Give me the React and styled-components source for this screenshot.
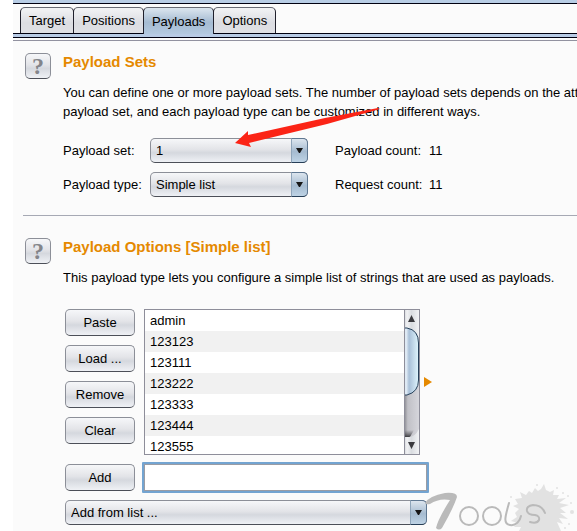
import React, { useState } from "react";
import styled, { createGlobalStyle } from "styled-components";

const tabs = ["Target", "Positions", "Payloads", "Options"];
const payloads = ["admin", "123123", "123111", "123222", "123333", "123444", "123555"];

export default function App() {
  const [active, setActive] = useState("Payloads");
  const [item, setItem] = useState("");

  return (
    <Window>
      <GlobalStyle />
      <TopBand />
      <TabBar role="tablist">
        {tabs.map((tab) => (
          <Tab
            key={tab}
            role="tab"
            aria-selected={tab === active}
            $active={tab === active}
            onClick={() => setActive(tab)}
          >
            {tab}
          </Tab>
        ))}
      </TabBar>
      <TabBand />

      <Panel>
        <Section>
          <HelpButton aria-label="Help">?</HelpButton>
          <Body>
            <Title>Payload Sets</Title>
            <Text>
              You can define one or more payload sets. The number of payload sets depends on the att
              <br />
              payload set, and each payload type can be customized in different ways.
            </Text>
            <Fields>
              <label htmlFor="payload-set">Payload set:</label>
              <Dropdown id="payload-set" options={["1"]} />
              <Count>
                <span>Payload count:</span>
                <span>11</span>
              </Count>
              <label htmlFor="payload-type">Payload type:</label>
              <Dropdown id="payload-type" options={["Simple list"]} />
              <Count>
                <span>Request count:</span>
                <span>11</span>
              </Count>
            </Fields>
            <RedArrow />
          </Body>
        </Section>

        <Divider />

        <Section>
          <HelpButton aria-label="Help">?</HelpButton>
          <Body>
            <Title>Payload Options [Simple list]</Title>
            <Text>
              This payload type lets you configure a simple list of strings that are used as payloads.
            </Text>
            <Editor>
              <ButtonColumn>
                <Button>Paste</Button>
                <Button>Load ...</Button>
                <Button>Remove</Button>
                <Button>Clear</Button>
              </ButtonColumn>
              <ListRow>
                <ListBox>
                  <List>
                    {payloads.map((p) => (
                      <Item key={p}>{p}</Item>
                    ))}
                  </List>
                  <ScrollBar />
                </ListBox>
                <Marker viewBox="0 0 8 10" aria-hidden="true">
                  <path d="M0 0L8 5L0 10Z" fill="#e58900" />
                </Marker>
              </ListRow>
              <AddButton>Add</AddButton>
              <TextInput
                aria-label="New item"
                value={item}
                onChange={(e) => setItem(e.target.value)}
              />
              <FullRow>
                <Dropdown label="Add from list" options={["Add from list ..."]} />
              </FullRow>
            </Editor>
          </Body>
        </Section>
      </Panel>
      <Watermark />
    </Window>
  );
}

function Dropdown({ id, label, options }) {
  return (
    <SelectBox>
      <Select id={id} aria-label={label}>
        {options.map((o) => (
          <option key={o}>{o}</option>
        ))}
      </Select>
      <SelectArrow>
        <svg width="7" height="6" viewBox="0 0 7 6">
          <path d="M0 0H7L4 5H3Z" fill="#171717" />
        </svg>
      </SelectArrow>
    </SelectBox>
  );
}

function ScrollBar() {
  return (
    <Scroll viewBox="0 0 15 144" preserveAspectRatio="none" aria-hidden="true">
      <defs>
        <linearGradient id="track">
          <stop offset="0" stopColor="#85858b" />
          <stop offset="0.25" stopColor="#c0c0c6" />
          <stop offset="1" stopColor="#d6d6dc" />
        </linearGradient>
        <linearGradient id="thumb">
          <stop offset="0" stopColor="#7f9dbd" />
          <stop offset="0.12" stopColor="#edf5fc" />
          <stop offset="0.35" stopColor="#a9c0d8" />
          <stop offset="1" stopColor="#dff5fd" />
        </linearGradient>
        <linearGradient id="cap">
          <stop offset="0" stopColor="#d0d3d7" />
          <stop offset="0.2" stopColor="#f1f2f4" />
          <stop offset="0.5" stopColor="#d9dce0" />
          <stop offset="1" stopColor="#f2f3f5" />
        </linearGradient>
        <linearGradient id="shade" x2="0" y2="1">
          <stop offset="0" stopColor="#55555a" stopOpacity="0" />
          <stop offset="1" stopColor="#3c3c40" />
        </linearGradient>
      </defs>
      <rect width="15" height="144" fill="url(#track)" />
      <path d="M1 120H10L6 127H1Z" fill="url(#shade)" />
      <path d="M0 0H15V28Q12 18 0 18Z" fill="url(#cap)" />
      <path d="M0 144H15V119Q11 127 5 127H0Z" fill="url(#cap)" />
      <path d="M0 18H3Q14.500 20 14.500 33V70Q14.500 82 3 85H0Z" fill="url(#thumb)" />
      <path
        d="M0 18H3Q14.500 20 14.500 33V70Q14.500 82 3 85H0"
        fill="none"
        stroke="#27415b"
      />
      <path d="M0.500 0V144" stroke="#8e8e9a" />
      <path d="M4 12L7.500 5L11 12ZM4 132H11L7.500 139Z" fill="#3a3a3e" />
    </Scroll>
  );
}

function RedArrow() {
  return (
    <ArrowSvg width="146" height="42" viewBox="0 0 146 42" aria-hidden="true">
      <path d="M0 36L13 24L13 28L90 11L143 1L145 2L92 17L14 36L16 40Z" fill="#fb2416" />
    </ArrowSvg>
  );
}

function Watermark() {
  return (
    <Mark viewBox="0 0 154 48" aria-hidden="true">
      <g fill="#e2e2e2">
        <path d="M99 15L97 9L103 12L106 8L109 10L112 5L115 8L118 6L121 1L123 7L127 9L131 7L130 12L136 12L134 16L143 15L136 20L146 22L137 25L143 30L137 30L145 36L136 35L140 41L134 39L138 48H96L98 44L91 44L95 40L88 38L94 34L92 30L96 26L90 23L95 21L92 16Z" />
        <circle cx="140" cy="10" r="1" />
        <circle cx="145" cy="13" r="1" />
        <circle cx="149" cy="29" r="2" />
        <circle cx="146" cy="41" r="1" />
        <circle cx="142" cy="45" r="1" />
        <circle cx="134" cy="5" r="1" />
        <circle cx="114" cy="2" r="1" />
        <circle cx="88" cy="14" r="1" />
        <circle cx="148" cy="20" r="1" />
      </g>
      <path
        d="M2 20Q6 13 22 10Q34 9 34 14Q30 26 19 45Q16 48 13 45Q15 36 27 17Q16 15 7 21Q3 22 2 20Z"
        fill="#bababa"
      />
      <g fill="none" stroke="#bababa" strokeLinecap="round" strokeWidth="2">
        <circle cx="46" cy="33" r="9" />
        <circle cx="69" cy="33" r="9" />
        <path d="M86 20C82 34 80 41 87 42C93 43 97 38 98 33" />
        <path d="M122 30Q119 22 110 22Q103 23 104 28Q105 32 112 32Q117 33 116 37Q114 41 107 39" />
      </g>
    </Mark>
  );
}

const GlobalStyle = createGlobalStyle`
  * {
    box-sizing: border-box;
  }
  body {
    margin: 0;
    background: #ffffff;
    color: #000000;
    font: 13px/19px "Liberation Sans", Arial, sans-serif;
  }
  button, input, select {
    font: inherit;
    color: inherit;
  }
`;

const Window = styled.div`
  position: relative;
  min-height: 100vh;
  margin-left: 13px;
  background: #fbfbfb;
  overflow: hidden;
`;

const TopBand = styled.div`
  height: 4px;
  background: #b8cde5;
  border-bottom: 1px solid #000010;
`;

/* the bottom line is the bar's own border, so the active tab can cover it */
const TabBar = styled.div`
  display: flex;
  align-items: flex-start;
  height: 30px;
  padding: 3px 0 0 7px;
  border-bottom: 1px solid #000010;
`;

const Tab = styled.button`
  height: ${(p) => (p.$active ? 27 : 26)}px;
  padding: 0 8px;
  margin-right: -1px;
  border: 1px solid #20202c;
  border-top-color: #686b74;
  border-bottom: 0;
  border-radius: 5px 5px 0 0;
  background: ${(p) =>
    p.$active
      ? "linear-gradient(#dce6ef, #a5bbd2 55%, #b3c9e0)"
      : "linear-gradient(#f2f3f5, #dcdde2 60%, #dfe0e5)"};
`;

const TabBand = styled.div`
  height: 7px;
  background: linear-gradient(#b8cbe5 3px, #000010 3px 4px, #fbfbfb 4px 6px, #9292a0 6px);
`;

const Panel = styled.main`
  padding: 12px 0 0 10px;
`;

const Section = styled.section`
  display: flex;
  align-items: flex-start;
  gap: 12px;
  padding-left: 2px;
`;

const Body = styled.div`
  position: relative;
  flex: 1;
  min-width: 0;
`;

const raised = `
  border: 1px solid #8c8f98;
  border-bottom-color: #4c4f58;
  border-radius: 5px;
  background: linear-gradient(#f6f7f9, #e3e4e8 45%, #d5d8de 60%, #eff1f5);
`;

const HelpButton = styled.button`
  ${raised}
  width: 26px;
  height: 26px;
  padding: 0;
  font: bold 24px/24px "Liberation Serif", serif;
  color: #83858a;
`;

const Title = styled.h2`
  margin: 0;
  font-size: 15px;
  line-height: 18px;
  color: #e58900;
`;

const Text = styled.p`
  margin: 12px 0 0;
  white-space: nowrap;
  overflow: hidden;
`;

const Fields = styled.div`
  display: grid;
  grid-template-columns: 79px 158px 1fr;
  align-items: center;
  column-gap: 8px;
  row-gap: 9px;
  margin-top: 17px;
  white-space: nowrap;
`;

const Count = styled.div`
  display: grid;
  grid-template-columns: 87px 1fr;
  column-gap: 7px;
  padding-left: 19px;
`;

const SelectBox = styled.div`
  display: grid;
  grid-template-columns: 1fr 17px;
  height: 25px;
`;

const Select = styled.select`
  ${raised}
  grid-area: 1 / 1 / 2 / 3;
  appearance: none;
  padding: 0 20px 0 5px;
`;

const SelectArrow = styled.span`
  grid-area: 1 / 2;
  display: grid;
  place-items: center;
  border: 1px solid #5f7892;
  border-left-color: #8fa5ba;
  border-bottom-color: #263e57;
  border-radius: 0 5px 5px 0;
  background: linear-gradient(#dce5ee, #a5bbd0 55%, #bed3e5);
  pointer-events: none;
`;

const Divider = styled.hr`
  height: 1px;
  margin: 18px 0 22px;
  border: 0;
  background: #a6a9b4;
`;

const Editor = styled.div`
  display: grid;
  grid-template-columns: 70px 287px;
  column-gap: 7px;
  row-gap: 7px;
  margin: 22px 0 0 2px;
`;

const ButtonColumn = styled.div`
  display: flex;
  flex-direction: column;
  gap: 9px;
`;

const Button = styled.button`
  ${raised}
  height: 27px;
  padding: 0;
`;

const AddButton = styled(Button)`
  align-self: center;
`;

const ListRow = styled.div`
  display: flex;
  align-items: center;
  gap: 4px;
  padding-left: 2px;
`;

const ListBox = styled.div`
  display: flex;
  flex: none;
  width: 276px;
  height: 146px;
  border: 1px solid #8e8e9a;
  background: #ffffff;
  overflow: hidden;
`;

const List = styled.ul`
  flex: 1;
  margin: 0;
  padding: 0;
  list-style: none;
`;

const Item = styled.li`
  padding-left: 5px;
  line-height: 21px;

  &:nth-child(even) {
    background: #f1f1f1;
  }
`;

const Scroll = styled.svg`
  width: 15px;
  height: 144px;
`;

const Marker = styled.svg`
  flex: none;
  width: 8px;
  height: 10px;
`;

const TextInput = styled.input`
  height: 31px;
  padding: 0 6px;
  border: 2px solid #73a4d1;
  box-shadow: inset 0 0 0 1px #9a9ca4;
  border-radius: 1px;
  background: #ffffff;
  outline: none;
`;

const FullRow = styled.div`
  grid-column: 1 / 3;
  padding-right: 2px;
`;

const ArrowSvg = styled.svg`
  position: absolute;
  left: 172px;
  top: 54px;
  pointer-events: none;
`;

const Mark = styled.svg`
  position: absolute;
  right: 0;
  bottom: 0;
  width: 154px;
  height: 48px;
  pointer-events: none;
`;
